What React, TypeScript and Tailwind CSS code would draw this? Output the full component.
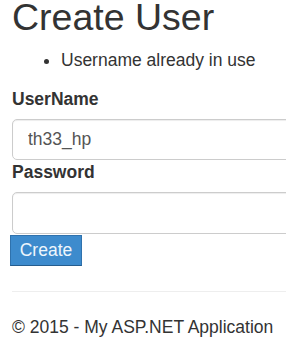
export default function App() {
  return (
    <div className="w-[286px] h-[345px] overflow-hidden bg-white text-[#333] font-['Liberation_Sans',Arial,sans-serif]">
      <div className="pl-[12px]">
        <h2 className="text-[37.5px] leading-[34px] font-normal">Create User</h2>
        <ul className="mt-[14.4px] pl-[49px] list-disc text-[17.5px] leading-[25px]">
          <li>Username already in use</li>
        </ul>
        <form className="mt-[14px] w-[320px]" onSubmit={(e) => e.preventDefault()}>
          <label className="block font-bold text-[17.5px] leading-[25px]">UserName</label>
          <input
            type="text"
            defaultValue="th33_hp"
            className="mt-[6.6px] block w-full h-[41px] px-[15px] border border-[#ccc] rounded-[5px] text-[17.5px] text-[#555] shadow-[inset_0_1px_1px_rgba(0,0,0,0.075)] outline-none"
          />
          <label className="block font-bold text-[17.5px] leading-[25px]">Password</label>
          <input
            type="password"
            className="mt-[7px] block w-full h-[42px] px-[15px] border border-[#ccc] rounded-[5px] text-[17.5px] shadow-[inset_0_1px_1px_rgba(0,0,0,0.075)] outline-none"
          />
          <button
            type="submit"
            className="mt-[1px] -ml-[2px] block w-[72px] h-[31px] bg-[#3d8bcd] border border-[#2f72ad] border-b-[#255d8e] text-[#eef6fc] text-[17.5px] leading-[28px] text-center"
          >
            Create
          </button>
        </form>
        <hr className="mt-[25px] w-[320px] border-t border-[#eee]" />
        <p className="mt-[23.5px] text-[17.5px] leading-[25px]">© 2015 - My ASP.NET Application</p>
      </div>
    </div>
  );
}
